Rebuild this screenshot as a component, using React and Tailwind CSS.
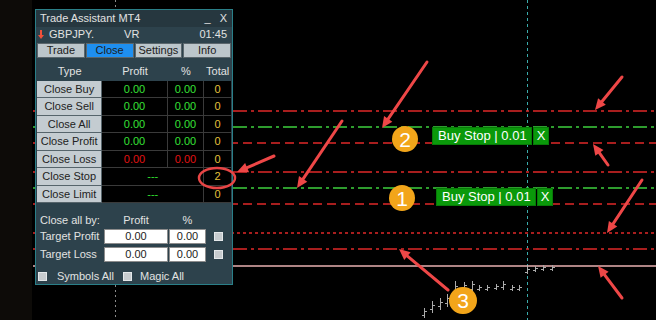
import React from 'react';

const RED = '#e02828';
const GREEN = '#3ed03e';

// chart level lines
const levels = [
  { y: 111, c: RED, d: '14 4 3 4' },
  { y: 127, c: GREEN, d: '14 4 3 4' },
  { y: 143, c: RED, d: '9 5' },
  { y: 172, c: RED, d: '14 4 3 4' },
  { y: 188, c: GREEN, d: '14 4 3 4' },
  { y: 204, c: RED, d: '9 5' },
  { y: 233, c: RED, d: '3 3' },
  { y: 249, c: RED, d: '14 4 3 4' },
];

// x, high, low
const bars = [
  [424, 308, 318], [432, 301, 313], [440, 298, 310], [447, 294, 307],
  [455, 281, 297], [464, 282, 291], [472, 281, 292], [479, 285, 291],
  [487, 285, 291], [496, 284, 290], [503, 281, 290], [512, 285, 291],
  [519, 285, 291], [527, 267, 274], [535, 266, 272], [543, 265, 271], [552, 265, 271],
];

const arrows = [
  [427, 62, 382, 128],
  [342, 121, 297, 188],
  [274, 156, 237, 172],
  [622, 77, 595, 110],
  [608, 165, 593, 144],
  [642, 180, 607, 233],
  [622, 298, 598, 266],
  [448, 290, 399, 249],
];

function Arrow({ x1, y1, x2, y2 }) {
  const a = Math.atan2(y2 - y1, x2 - x1);
  const L = 11, W = 5;
  const bx = x2 - L * Math.cos(a), by = y2 - L * Math.sin(a);
  const px = -Math.sin(a) * W, py = Math.cos(a) * W;
  return (
    <g>
      <line x1={x1} y1={y1} x2={bx} y2={by} stroke="#ee4747" strokeWidth="3" strokeLinecap="round" />
      <polygon points={`${x2},${y2} ${bx + px},${by + py} ${bx - px},${by - py}`} fill="#ee4747" />
    </g>
  );
}

const rows = [
  { name: 'Close Buy', tone: 'g', h: 'h-[17px]' },
  { name: 'Close Sell', tone: 'g', h: 'h-[18px]' },
  { name: 'Close All', tone: 'g', h: 'h-[17px]' },
  { name: 'Close Profit', tone: 'g', h: 'h-[18px]' },
  { name: 'Close Loss', tone: 'r', h: 'h-[17px]' },
  { name: 'Close Stop', merged: true, total: '2', h: 'h-[18px]' },
  { name: 'Close Limit', merged: true, total: '0', h: 'h-[17px]' },
];

function Badge({ n, cls }) {
  return (
    <div className={`absolute ${cls} rounded-full bg-[#f2a51a] flex items-center justify-center text-white text-[21px] leading-none`}>
      {n}
    </div>
  );
}

function OrderLabel({ cls }) {
  return (
    <div className={`absolute ${cls} flex h-[18px] gap-px text-white text-[13px] leading-[16px]`}>
      <div className="w-[100px] bg-[#0a990a] border border-[#087a08] pl-[5px] whitespace-nowrap">Buy Stop | 0.01</div>
      <div className="w-[16px] bg-[#0a990a] border border-[#087a08] text-center">X</div>
    </div>
  );
}

export default function App() {
  return (
    <div className="relative w-[656px] h-[320px] overflow-hidden bg-black font-['Liberation_Sans',Arial,sans-serif]">
      <div className="absolute left-0 top-0 w-[32px] h-full bg-[#0d0b08]" />

      {/* chart */}
      <svg className="absolute inset-0" width="656" height="320">
        <line x1="115.5" y1="0" x2="115.5" y2="320" stroke="#8a8a8a" strokeDasharray="2 3" />
        <line x1="527.5" y1="0" x2="527.5" y2="320" stroke="#3aacac" strokeDasharray="3 3" />
        {levels.map(l => (
          <line key={l.y} x1="33" y1={l.y} x2="656" y2={l.y} stroke={l.c} strokeWidth="1.4" strokeDasharray={l.d} />
        ))}
        <line x1="33" y1="266" x2="656" y2="266" stroke="#e8b0b0" strokeWidth="1.4" />
        {bars.map(([x, hi, lo], i) => {
          const o = hi + Math.round((lo - hi) * 0.7);
          const c = hi + Math.round((lo - hi) * 0.3);
          return (
            <path key={i} d={`M${x + 0.5} ${hi} V${lo} M${x - 2} ${o + 0.5} H${x} M${x + 1} ${c + 0.5} H${x + 3}`} stroke="#ababab" fill="none" />
          );
        })}
      </svg>

      {/* trade assistant panel */}
      <div className="absolute left-[35px] top-[9px] w-[198px] h-[276px] border border-[#2a7f88] bg-[#2d424c] flex flex-col text-[11px] text-[#e2e2e2]">
        <div className="h-[17px] bg-[#26373f] flex items-center pl-[4px] pr-[5px]">
          <span>Trade Assistant MT4</span>
          <span className="ml-auto">_</span>
          <span className="ml-[9px]">X</span>
        </div>
        <div className="h-[15px] flex items-center pl-[2px] pr-[5px]">
          <svg width="6" height="9" viewBox="0 0 6 9">
            <path d="M2 0 H4 V5 H6 L3 9 L0 5 H2 Z" fill="#f0503a" />
          </svg>
          <span className="ml-[5px]">GBPJPY.</span>
          <span className="ml-[30px]">VR</span>
          <span className="ml-auto">01:45</span>
        </div>
        <div className="mt-px h-[15px] flex gap-px px-px text-[#1c1c1c]">
          {['Trade', 'Close', 'Settings', 'Info'].map(t => (
            <div key={t} className={`w-[48px] h-full flex items-center justify-center border border-[#5a666c] leading-none ${t === 'Close' ? 'bg-[#1e8ff0]' : 'bg-[#bcc6cb]'}`}>{t}</div>
          ))}
        </div>
        <div className="h-[23px] flex items-end pb-[2px] px-px">
          <div className="w-[66px] text-center">Type</div>
          <div className="w-[66px] text-center">Profit</div>
          <div className="w-[37px] text-center">%</div>
          <div className="w-[27px] text-center">Total</div>
        </div>
        <div className="flex flex-col px-px">
          {rows.map(r => {
            const tc = r.tone === 'r' ? 'text-[#e01212]' : 'text-[#36e036]';
            return (
              <div key={r.name} className={`${r.h} flex`}>
                <div className="w-[66px] h-full bg-[#c4ccd1] border-b border-r border-[#56646b] flex items-center justify-center text-[#222]">{r.name}</div>
                {r.merged ? (
                  <div className="w-[103px] h-full bg-black border-b border-r border-[#3a3a3a] flex items-center justify-center text-[#30e030]">---</div>
                ) : (
                  <>
                    <div className={`w-[66px] h-full bg-black border-b border-r border-[#3a3a3a] flex items-center justify-center ${tc}`}>0.00</div>
                    <div className={`w-[37px] h-full bg-black border-b border-r border-[#3a3a3a] flex items-center justify-center ${tc}`}>0.00</div>
                  </>
                )}
                <div className="w-[27px] h-full bg-black border-b border-[#3a3a3a] flex items-center justify-center text-[#e6c23c]">{r.merged ? r.total : '0'}</div>
              </div>
            );
          })}
        </div>
        <div className="mt-[10px] h-[14px] flex items-center">
          <div className="w-[68px] pl-[4px]">Close all by:</div>
          <div className="w-[64px] text-center">Profit</div>
          <div className="ml-px w-[37px] text-center">%</div>
        </div>
        {['Target Profit', 'Target Loss'].map((t, i) => (
          <div key={t} className={`${i === 0 ? 'mt-[2px]' : 'mt-[3px]'} h-[15px] flex items-center`}>
            <div className="w-[68px] pl-[4px]">{t}</div>
            <div className="w-[64px] h-full bg-white border border-[#8c8c8c] flex items-center justify-center text-[#1c1c1c]">0.00</div>
            <div className="ml-px w-[37px] h-full bg-white border border-[#8c8c8c] flex items-center justify-center text-[#1c1c1c]">0.00</div>
            <div className="ml-[8px] w-[9px] h-[9px] bg-[#c6cbce] border border-[#e4e8ea]" />
          </div>
        ))}
        <div className="mt-[6px] h-[16px] flex items-center pl-[2px]">
          <div className="w-[85px] flex items-center">
            <div className="w-[9px] h-[9px] bg-[#c6cbce] border border-[#e4e8ea]" />
            <span className="ml-[10px]">Symbols All</span>
          </div>
          <div className="w-[9px] h-[9px] bg-[#c6cbce] border border-[#e4e8ea]" />
          <span className="ml-[8px]">Magic All</span>
        </div>
      </div>

      {/* annotations */}
      <svg className="absolute inset-0" width="656" height="320">
        {arrows.map(([x1, y1, x2, y2], i) => (
          <Arrow key={i} x1={x1} y1={y1} x2={x2} y2={y2} />
        ))}
        <ellipse cx="217" cy="178" rx="18" ry="10" fill="none" stroke="#e84545" strokeWidth="2.5" />
      </svg>

      <Badge n="2" cls="left-[392px] top-[126px] w-[26px] h-[26px]" />
      <Badge n="1" cls="left-[389px] top-[185px] w-[26px] h-[26px]" />
      <Badge n="3" cls="left-[449px] top-[287px] w-[28px] h-[27px]" />
      <OrderLabel cls="left-[432px] top-[127px]" />
      <OrderLabel cls="left-[436px] top-[188px]" />
    </div>
  );
}
